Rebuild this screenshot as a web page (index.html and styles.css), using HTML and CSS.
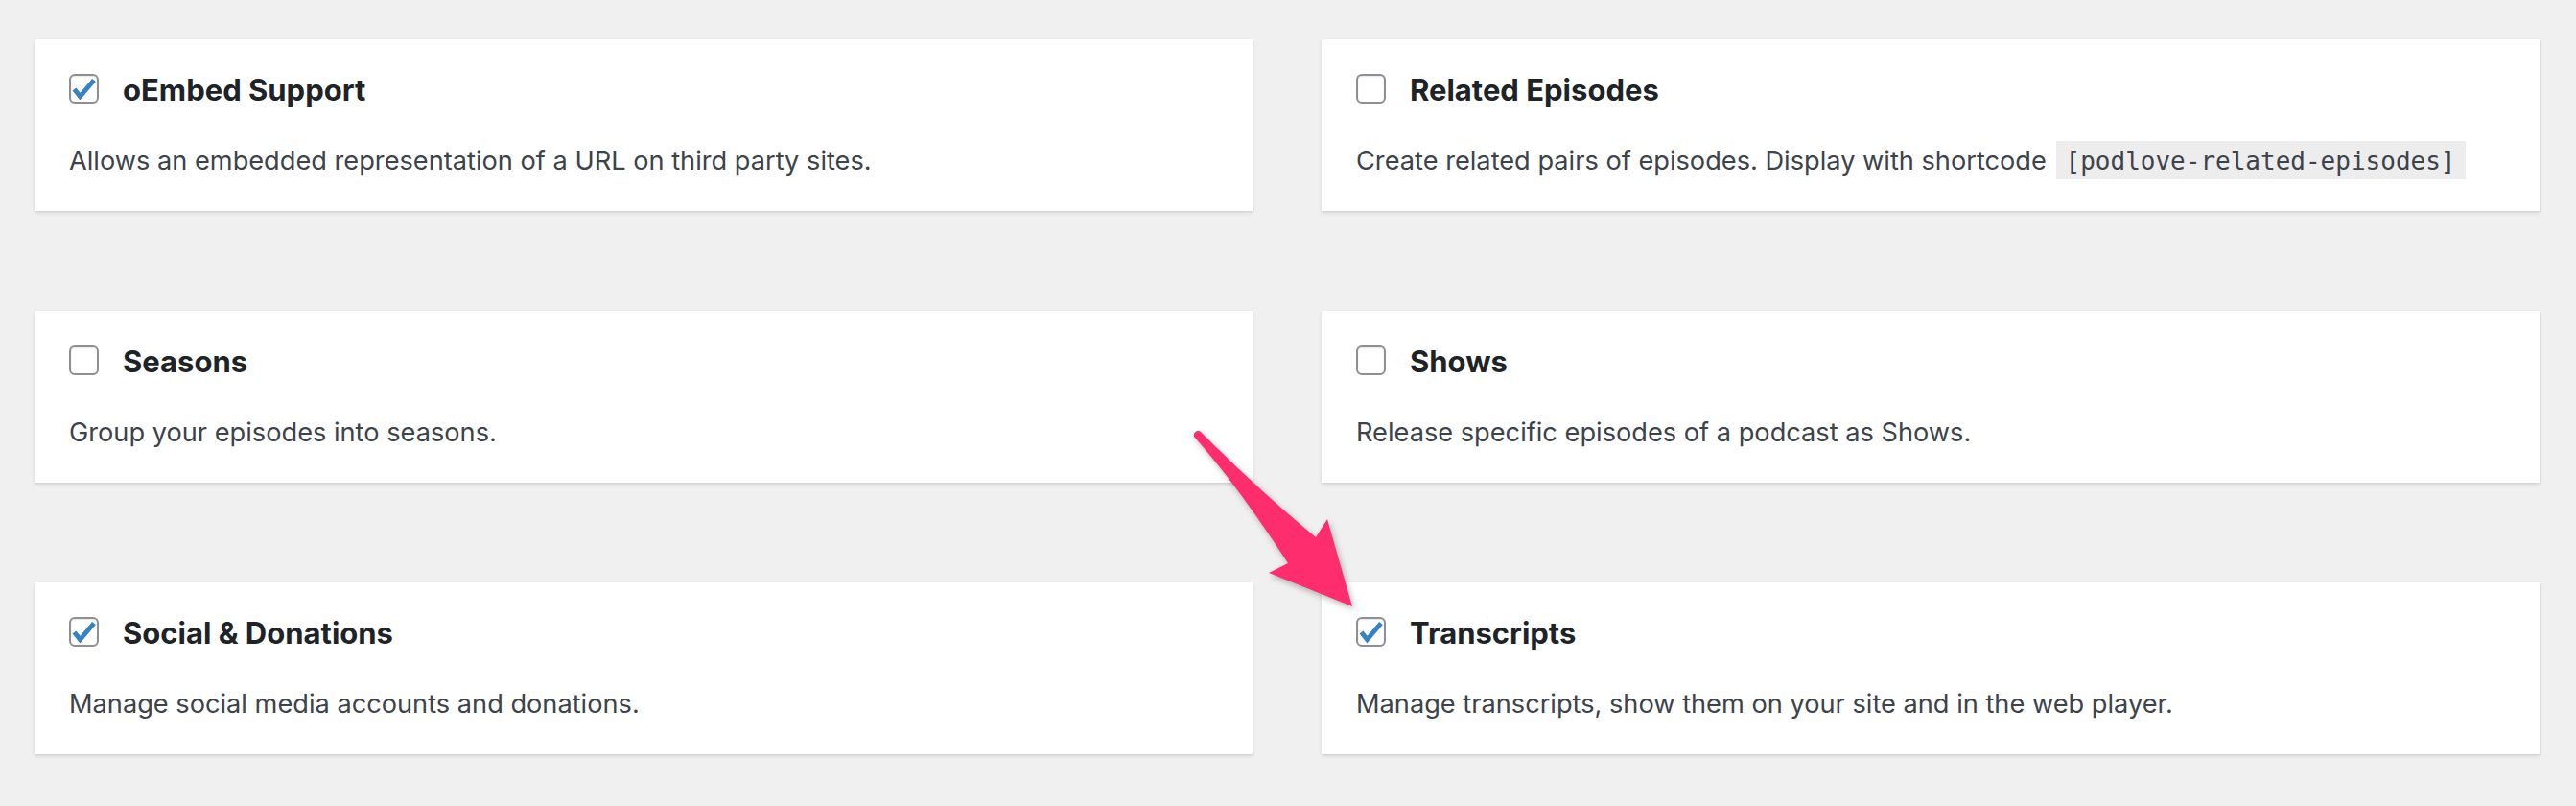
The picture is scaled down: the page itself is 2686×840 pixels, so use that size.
FILE: index.html
```html
<!DOCTYPE html>
<html lang="en">
<head>
<meta charset="utf-8">
<title>Modules</title>
<link rel="stylesheet" href="styles.css">
</head>
<body>
<div class="page">
  <div class="grid">
    <div class="card">
      <div class="head">
        <span class="cb checked"><svg viewBox="0 0 31 31"><path d="M5.5 16 L11.5 23.5 L26 6.5" /></svg></span>
        <span class="title">oEmbed Support</span>
      </div>
      <p class="desc">Allows an embedded representation of a URL on third party sites.</p>
    </div>
    <div class="card">
      <div class="head">
        <span class="cb"></span>
        <span class="title">Related Episodes</span>
      </div>
      <p class="desc">Create related pairs of episodes. Display with shortcode <code>[podlove-related-episodes]</code></p>
    </div>
    <div class="card">
      <div class="head">
        <span class="cb"></span>
        <span class="title">Seasons</span>
      </div>
      <p class="desc">Group your episodes into seasons.</p>
    </div>
    <div class="card">
      <div class="head">
        <span class="cb"></span>
        <span class="title">Shows</span>
      </div>
      <p class="desc">Release specific episodes of a podcast as Shows.</p>
    </div>
    <div class="card">
      <div class="head">
        <span class="cb checked"><svg viewBox="0 0 31 31"><path d="M5.5 16 L11.5 23.5 L26 6.5" /></svg></span>
        <span class="title">Social &amp; Donations</span>
      </div>
      <p class="desc">Manage social media accounts and donations.</p>
    </div>
    <div class="card">
      <div class="head">
        <span class="cb checked"><svg viewBox="0 0 31 31"><path d="M5.5 16 L11.5 23.5 L26 6.5" /></svg></span>
        <span class="title">Transcripts</span>
      </div>
      <p class="desc">Manage transcripts, show them on your site and in the web player.</p>
    </div>
  </div>
  <svg class="arrow" viewBox="1230 440 200 210" width="200" height="210">
    <path d="M1245 455 Q1292 508 1343 587 L1323 597 L1410 632 L1384 541 L1372 560 Q1306 505 1252 450 A4.5 4.5 0 0 0 1245 455 Z" />
  </svg>
</div>
</body>
</html>
```
FILE: styles.css
```css
html, body {
  margin: 0;
  padding: 0;
  background: #f0f0f1;
}
body {
  width: 2686px;
  height: 840px;
  overflow: hidden;
  font-family: Inter, "Noto Sans", "Liberation Sans", sans-serif;
}
.page {
  position: relative;
  padding: 41px 38px 0 36px;
}
.grid {
  display: grid;
  grid-template-columns: 1270px 1270px;
  column-gap: 72px;
  row-gap: 104px;
}
.card {
  box-sizing: border-box;
  height: 179px;
  background: #fff;
  padding: 36px 35px 0 36px;
  box-shadow: 0 2px 4px rgba(0, 0, 0, 0.10), 1px 1px 2px rgba(0, 0, 0, 0.06);
}
.head {
  display: flex;
  align-items: center;
  height: 31px;
}
.cb {
  box-sizing: border-box;
  width: 31px;
  height: 31px;
  border: 2px solid #8c8f94;
  border-radius: 6px;
  background: #fff;
  box-shadow: inset 0 1px 2px rgba(0, 0, 0, 0.1);
  display: flex;
  align-items: center;
  justify-content: center;
  margin-right: 25px;
  flex: none;
}
.cb svg {
  width: 31px;
  height: 31px;
  margin: -2px;
}
.cb svg path {
  fill: none;
  stroke: #3582c4;
  stroke-width: 5;
  stroke-linecap: butt;
  stroke-linejoin: miter;
}
.title {
  font-size: 31px;
  font-weight: 700;
  color: #1d2327;
  line-height: 31px;
  position: relative;
  top: 1px;
}
.desc {
  margin: 41px 0 0;
  font-size: 27.2px;
  line-height: 38px;
  color: #3c434a;
  white-space: nowrap;
}
code {
  font-family: "DejaVu Sans Mono", "Liberation Mono", monospace;
  font-size: 26px;
  background: #ededee;
  padding: 6px 10px 4px;
  color: #3c434a;
  margin-left: 2px;
}
.arrow {
  position: absolute;
  left: 1230px;
  top: 440px;
  overflow: visible;
  filter: drop-shadow(2px 3px 3px rgba(0, 0, 0, 0.28));
}
.arrow path {
  fill: #fe2d6d;
}
```
